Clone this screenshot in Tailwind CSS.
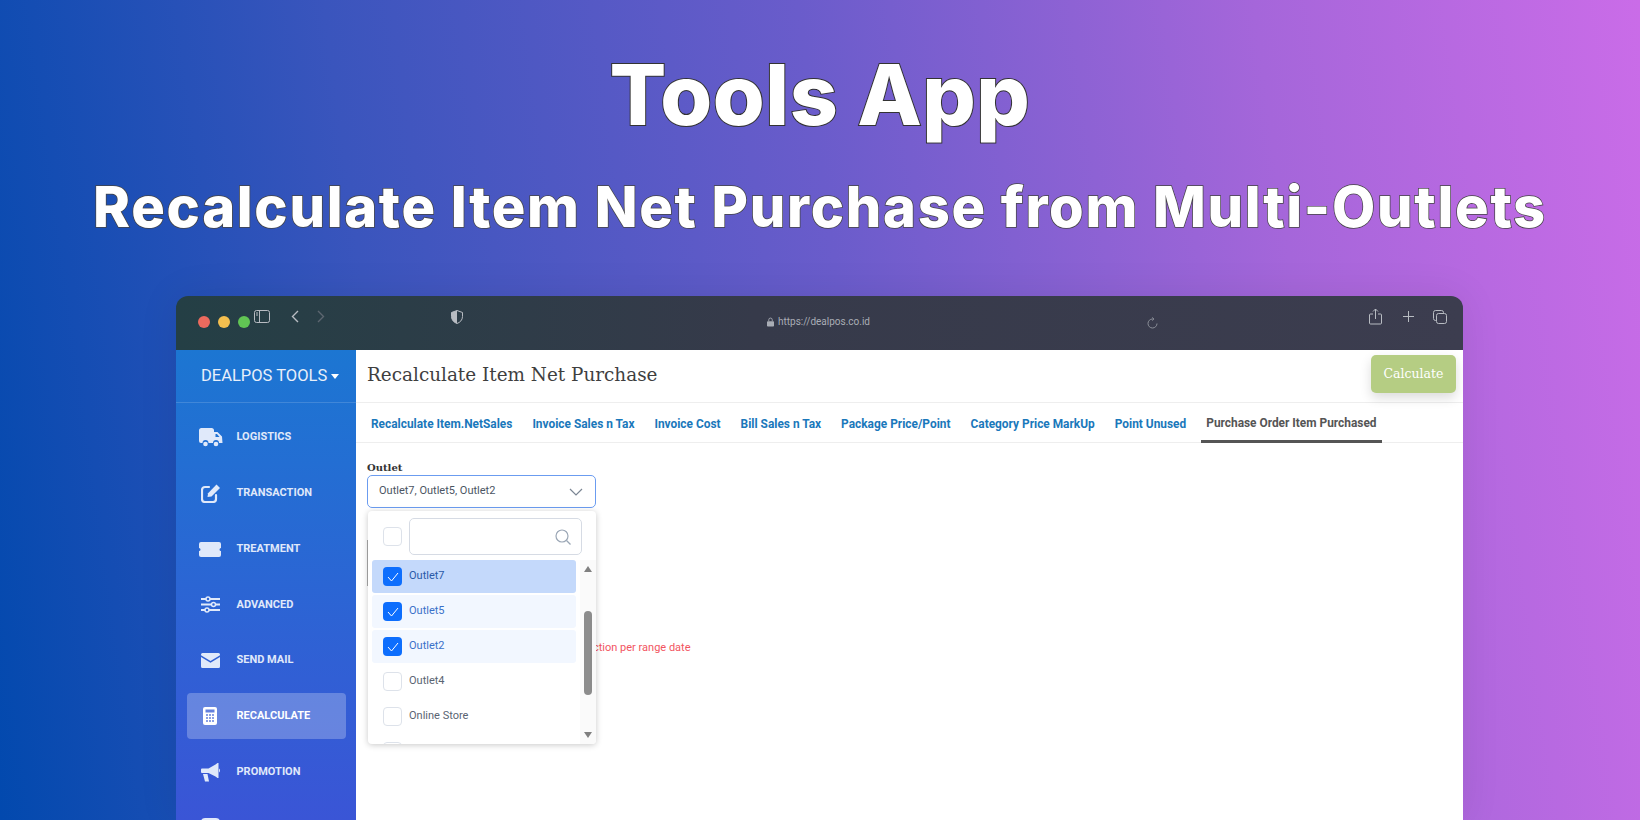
<!DOCTYPE html>
<html lang="en">
	<head>
		<meta charset="UTF-8" />
		<title>Tools App</title>
		<script src="https://cdn.jsdelivr.net/npm/@tailwindcss/browser@4"></script>
	</head>
	<body class="m-0 h-[820px] w-[1640px] overflow-hidden bg-[linear-gradient(82deg,#0249ae_0%,#3a55bd_25%,#6a5ccb_52%,#a566da_78%,#ca6ce8_100%)] font-['Roboto',sans-serif]">
		<header class="flex h-[296px] flex-col items-center text-white">
			<h1 class="mt-[45px] text-[84px] leading-[100px] font-extrabold font-['Inter',sans-serif] tracking-[0.5px] [-webkit-text-stroke:2px_#333] [paint-order:stroke_fill]">Tools App</h1>
			<h2 class="mt-[27px] text-[56px] leading-[70px] font-extrabold font-['Inter',sans-serif] tracking-[1.7px] whitespace-nowrap [-webkit-text-stroke:1.5px_#444] [paint-order:stroke_fill]">Recalculate Item Net Purchase from Multi-Outlets</h2>
		</header>

		<main class="ml-[176px] flex h-[524px] w-[1287px] flex-col overflow-hidden rounded-t-xl shadow-[0_0_40px_rgba(0,0,0,.08)]">
			<!-- browser bar -->
			<div class="relative h-[54px] shrink-0 bg-[linear-gradient(90deg,#243f45,#363a4a_45%,#3c3d4f)] text-[#b8bcc2]">
				<div class="absolute top-[20px] left-[22px] flex gap-[8px]">
					<span class="size-[12px] rounded-full bg-[#ec6a5e]"></span>
					<span class="size-[12px] rounded-full bg-[#f4bf4f]"></span>
					<span class="size-[12px] rounded-full bg-[#61c554]"></span>
				</div>
				<svg class="absolute top-[14px] left-[78px]" width="16" height="13" viewBox="0 0 16 13" fill="none" stroke="currentColor"><rect x=".5" y=".5" width="15" height="12" rx="2" /><path d="M5.500 1v11M2 3h2M2 5h2" /></svg>
				<svg class="absolute top-[14px] left-[115px]" width="8" height="13" viewBox="0 0 8 13" fill="none" stroke="currentColor" stroke-width="1.400"><path d="M7 1 1.500 6.500 7 12" /></svg>
				<svg class="absolute top-[14px] left-[141px] text-[#5d6670]" width="8" height="13" viewBox="0 0 8 13" fill="none" stroke="currentColor" stroke-width="1.400"><path d="m1 1 5.500 5.500L1 12" /></svg>
				<svg class="absolute top-[14px] left-[275px]" width="12" height="14" viewBox="0 0 12 14"><path d="M6 .5 11.500 2.500v4c0 3.500-2.500 6-5.500 7-3-1-5.500-3.500-5.500-7v-4z" fill="none" stroke="currentColor" /><path d="M6 .5v13c-3-1-5.500-3.500-5.500-7v-4z" fill="currentColor" /></svg>
				<div class="absolute top-[19px] left-[591px] flex items-center gap-[4px] text-[10px] leading-[14px] text-[#a9adb5]">
					<svg width="7" height="10" viewBox="0 0 8 10" fill="currentColor"><path d="M1 4h6a1 1 0 0 1 1 1v4a1 1 0 0 1-1 1H1a1 1 0 0 1-1-1V5a1 1 0 0 1 1-1z" /><path d="M2 4V2.500a2 2 0 0 1 4 0V4" fill="none" stroke="currentColor" /></svg>
					https://dealpos.co.id
				</div>
				<svg class="absolute top-[21px] left-[971px] text-[#8b8f98]" width="11" height="12" viewBox="0 0 11 12" fill="none" stroke="currentColor"><path d="M5.500 2a4.500 4.500 0 1 0 4.500 4.500M5 .5 7 2 5 3.500" /></svg>
				<svg class="absolute top-[12px] left-[1193px]" width="13" height="17" viewBox="0 0 13 17" fill="none" stroke="currentColor"><path d="M4 6H1.500a1 1 0 0 0-1 1v8a1 1 0 0 0 1 1h10a1 1 0 0 0 1-1V7a1 1 0 0 0-1-1H9M6.500 11V1M4 3.500 6.500 1 9 3.500" /></svg>
				<svg class="absolute top-[15px] left-[1227px]" width="11" height="11" viewBox="0 0 11 11" fill="none" stroke="currentColor"><path d="M5.500 0v11M0 5.500h11" /></svg>
				<svg class="absolute top-[14px] left-[1257px]" width="14" height="14" viewBox="0 0 14 14" fill="none" stroke="currentColor"><rect x="3.500" y="3.500" width="10" height="10" rx="2" /><path d="M3.500 10.500h-1a2 2 0 0 1-2-2v-6a2 2 0 0 1 2-2h6a2 2 0 0 1 2 2v1" /></svg>
			</div>

			<div class="flex min-h-0 flex-1 bg-white">
				<!-- sidebar -->
				<aside class="h-[470px] w-[180px] shrink-0 bg-[linear-gradient(180deg,#1c76d2,#3a55d6)] text-[#e0e9fa]">
					<div class="flex h-[53px] items-center gap-[4px] border-b border-white/15 pl-[25px] text-[16.500px] text-[#e8effa]">
						DEALPOS TOOLS
						<span class="mt-[1px] size-0 border-x-[4.500px] border-t-[5px] border-x-transparent border-t-white"></span>
					</div>
					<nav class="flex flex-col gap-[9.800px] px-[10.500px] pt-[10.700px] text-[11px] font-bold">
						<a class="flex h-[46px] items-center pt-[1.500px] pl-[12px]">
							<span class="w-[38px]">
								<svg width="24" height="19" viewBox="0 0 24 19" fill="currentColor">
									<path d="M0 2.500A2.500 2.500 0 0 1 2.500 0h10A2.500 2.500 0 0 1 15 2.500V4h3.500L23 8.500l.5 6.500H20a3 3 0 0 0-6 0H9.500a3 3 0 0 0-6 0H2a2 2 0 0 1-2-2z" />
									<path d="M16.500 6h1.500l2.500 3h-4z" fill="#2273d3" />
									<circle cx="6.500" cy="16" r="2.300" />
									<circle cx="17" cy="16" r="2.300" />
								</svg>
							</span>
							LOGISTICS
						</a>
						<a class="flex h-[46px] items-center pt-[1.500px] pl-[12px]">
							<span class="w-[38px] pl-[2.500px]">
								<svg width="19" height="19" viewBox="0 0 19 19" fill="none" stroke="currentColor" stroke-width="2.200" stroke-linecap="round"><path d="M8 3H4a3 3 0 0 0-3 3v9a3 3 0 0 0 3 3h8a3 3 0 0 0 3-3v-4" /><path d="m6.500 13 .6-3.800L15.500.5 19 4l-8.500 8.500z" fill="currentColor" stroke="none" /></svg>
							</span>
							TRANSACTION
						</a>
						<a class="flex h-[46px] items-center pt-[1.500px] pl-[12px]">
							<span class="w-[38px] pl-[.5px]">
								<svg width="22" height="15" viewBox="0 0 22 15" fill="currentColor"><path d="M2 0h18a2 2 0 0 1 2 2v4a1.500 1.500 0 0 0 0 3v4a2 2 0 0 1-2 2H2a2 2 0 0 1-2-2V9a1.500 1.500 0 0 0 0-3V2a2 2 0 0 1 2-2z" /></svg>
							</span>
							TREATMENT
						</a>
						<a class="flex h-[46px] items-center pt-[1.500px] pl-[12px]">
							<span class="w-[38px] pl-[2.500px]">
								<svg width="19" height="17" viewBox="0 0 19 17" fill="none" stroke="currentColor" stroke-width="2"><path d="M0 3h19M0 8.500h19M0 14h19" /><circle cx="7" cy="3" r="2" fill="#2d66d8" stroke-width="1.500" /><circle cx="12.500" cy="8.500" r="2" fill="#2d66d8" stroke-width="1.500" /><circle cx="6" cy="14" r="2" fill="#2d66d8" stroke-width="1.500" /></svg>
							</span>
							ADVANCED
						</a>
						<a class="flex h-[46px] items-center pt-[1.500px] pl-[12px]">
							<span class="w-[38px] pl-[2.500px]">
								<svg width="19" height="15" viewBox="0 0 19 15" fill="currentColor"><path d="M1.500 0h16A1.500 1.500 0 0 1 19 1.500v.7L9.500 8 0 2.200v-.7A1.500 1.500 0 0 1 1.500 0z" /><path d="M0 4v9.500A1.500 1.500 0 0 0 1.500 15h16a1.500 1.500 0 0 0 1.500-1.500V4L9.500 9.800z" /></svg>
							</span>
							SEND MAIL
						</a>
						<a class="flex h-[46px] items-center rounded bg-white/25 pt-[1.500px] pl-[12px] text-white">
							<span class="w-[38px] pl-[4px]">
								<svg width="14" height="18" viewBox="0 0 14 18"><rect width="14" height="18" rx="2" fill="currentColor" /><path d="M2.500 2.500h9v3h-9z" fill="#6380dd" /><path d="M3 8h2M6 8h2M9 8h2M3 11h2M6 11h2M9 11h2M3 14h2M6 14h2M9 14h2" stroke="#6380dd" stroke-width="1.500" /></svg>
							</span>
							RECALCULATE
						</a>
						<a class="flex h-[46px] items-center pt-[1.500px] pl-[12px]">
							<span class="w-[38px] pl-[2.500px]">
								<svg width="19" height="19" viewBox="0 0 19 19" fill="currentColor"><path d="M0 6.500a1 1 0 0 1 1-1h6.500L14.500 1.500 16.500 0h1v15h-1l-2-1.500-7-3.500H1a1 1 0 0 1-1-1z" /><path d="M2 11h4.500L8 18.500H4zM18 5.500a2.500 2.500 0 0 1 1 2 2.500 2.500 0 0 1-1 2z" /></svg>
							</span>
							PROMOTION
						</a>
						<a class="flex h-[46px] items-start pt-[14px] pl-[14.500px]">
							<span class="h-[16px] w-[19px] rounded-sm bg-[#e0e9fa]"></span>
						</a>
					</nav>
				</aside>

				<!-- content -->
				<section class="relative min-w-0 flex-1">
					<div class="flex h-[53px] items-start justify-between border-b border-[#eeeeee] pt-[5px] pr-[7px] pl-[11px]">
						<h3 class="mt-[5px] text-[18.400px] leading-[30px] text-[#3f3f3f] font-['DejaVu_Serif',serif]">Recalculate Item Net Purchase</h3>
						<button class="h-[38px] w-[85px] rounded-[5px] bg-[#b5cd83] text-[12.500px] text-white shadow-[0_5px_12px_rgba(0,0,0,.14)] font-['DejaVu_Serif',serif]">Calculate</button>
					</div>
					<div class="flex h-[40px] items-stretch border-b border-[#eeeeee] pl-[5px] text-[11.900px] font-bold text-[#1a78bb]">
						<a class="px-[10px] pt-[3px] leading-[37px]">Recalculate Item.NetSales</a>
						<a class="px-[10px] pt-[3px] leading-[37px]">Invoice Sales n Tax</a>
						<a class="px-[10px] pt-[3px] leading-[37px]">Invoice Cost</a>
						<a class="px-[10px] pt-[3px] leading-[37px]">Bill Sales n Tax</a>
						<a class="px-[10px] pt-[3px] leading-[37px]">Package Price/Point</a>
						<a class="px-[10px] pt-[3px] leading-[37px]">Category Price MarkUp</a>
						<a class="px-[10px] pt-[3px] leading-[37px]">Point Unused</a>
						<a class="ml-[5px] -mb-[1px] border-b-[3px] border-[#555555] px-[5px] pt-[3px] leading-[35px] text-[#555555]">Purchase Order Item Purchased</a>
					</div>

					<div class="pt-[18px] pl-[11px]">
						<label class="block text-[10px] leading-[14px] font-bold text-[#333333] font-['DejaVu_Serif',serif]">Outlet</label>
						<div class="flex h-[33px] w-[229px] items-center justify-between rounded-[5px] border border-[#6b9cf0] pr-[12px] pl-[11px] text-[11px] text-[#4b5563]">
							Outlet7, Outlet5, Outlet2
							<svg width="14" height="8" viewBox="0 0 14 8" fill="none" stroke="#7b8694" stroke-width="1.200"><path d="m1 1 6 6 6-6" /></svg>
						</div>
					</div>

					<p class="absolute top-[290px] left-[237px] text-[11px] text-[#f2555f]">ction per range date</p>
					<span class="absolute top-[190px] left-[11px] h-[46px] w-px bg-[#aaaaaa]"></span>

					<!-- dropdown -->
					<div class="absolute top-[161px] left-[12px] flex h-[233px] w-[228px] flex-col overflow-hidden rounded-[4px] bg-white shadow-[0_1px_6px_rgba(0,0,0,.22)]">
						<div class="flex items-center gap-[7px] pt-[7px] pl-[15px]">
							<span class="size-[19px] rounded-[4px] border border-[#dde2ea]"></span>
							<div class="flex h-[37px] w-[173px] items-center justify-end rounded-[5px] border border-[#d6dbe4] pr-[10px]">
								<svg width="16" height="16" viewBox="0 0 16 16" fill="none" stroke="#9aa6b5" stroke-width="1.200"><circle cx="7" cy="7" r="6" /><path d="m11.500 11.500 4 4" /></svg>
							</div>
						</div>
						<div class="relative mt-[5px] flex min-h-0 flex-1 flex-col gap-[2px] overflow-hidden pl-[4px] text-[11px]">
							<div class="flex h-[33px] w-[204px] shrink-0 items-center gap-[7px] rounded-[3px] bg-[#c4d9fb] pl-[11px] text-[#2a5aa8]">
								<span class="flex size-[19px] items-center justify-center rounded-[4px] bg-[#0d6efd]"><svg width="12" height="10" viewBox="0 0 12 10" fill="none" stroke="white"><path d="m1 5 3.500 4L11 1" /></svg></span>
								Outlet7
							</div>
							<div class="flex h-[33px] w-[204px] shrink-0 items-center gap-[7px] rounded-[3px] bg-[#f2f7ff] pl-[11px] text-[#3a70c9]">
								<span class="flex size-[19px] items-center justify-center rounded-[4px] bg-[#0d6efd]"><svg width="12" height="10" viewBox="0 0 12 10" fill="none" stroke="white"><path d="m1 5 3.500 4L11 1" /></svg></span>
								Outlet5
							</div>
							<div class="flex h-[33px] w-[204px] shrink-0 items-center gap-[7px] rounded-[3px] bg-[#f2f7ff] pl-[11px] text-[#3a70c9]">
								<span class="flex size-[19px] items-center justify-center rounded-[4px] bg-[#0d6efd]"><svg width="12" height="10" viewBox="0 0 12 10" fill="none" stroke="white"><path d="m1 5 3.500 4L11 1" /></svg></span>
								Outlet2
							</div>
							<div class="flex h-[33px] w-[204px] shrink-0 items-center gap-[7px] pl-[11px] text-[#5a6472]">
								<span class="size-[19px] rounded-[4px] border border-[#dde2ea]"></span>
								Outlet4
							</div>
							<div class="flex h-[33px] w-[204px] shrink-0 items-center gap-[7px] pl-[11px] text-[#5a6472]">
								<span class="size-[19px] rounded-[4px] border border-[#dde2ea]"></span>
								Online Store
							</div>
							<div class="flex h-[33px] w-[204px] shrink-0 items-center gap-[7px] pl-[11px] text-[#5a6472]">
								<span class="size-[19px] rounded-[4px] border border-[#dde2ea]"></span>
							</div>

							<!-- scrollbar -->
							<div class="absolute top-0 right-0 bottom-0 flex w-[16px] flex-col items-center bg-[#fafafa] pt-[6px] pb-[6px]">
								<span class="size-0 border-x-[4px] border-b-[6px] border-x-transparent border-b-[#808080]"></span>
								<span class="mt-[39px] h-[84px] w-[8px] rounded-full bg-[#8c8c8c]"></span>
								<span class="mt-auto size-0 border-x-[4px] border-t-[6px] border-x-transparent border-t-[#808080]"></span>
							</div>
						</div>
					</div>
				</section>
			</div>
		</main>
	</body>
</html>
